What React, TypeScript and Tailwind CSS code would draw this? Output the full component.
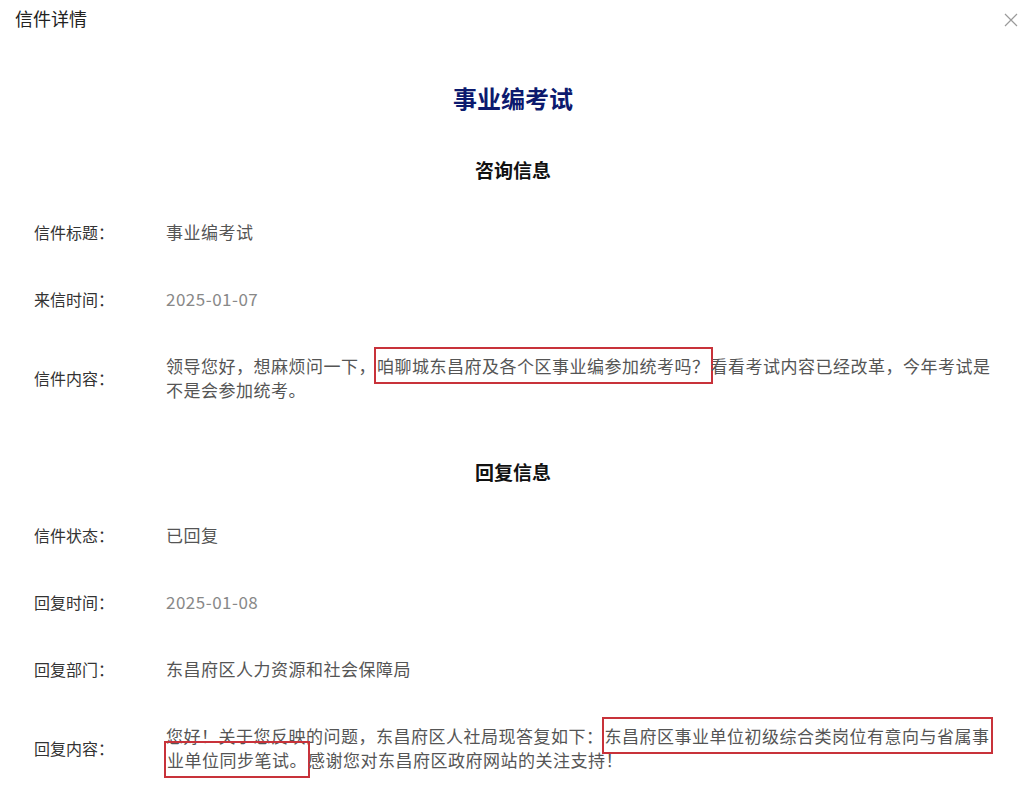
import React from "react";

const font = { fontFamily: '"Noto Sans CJK SC", "Noto Sans", sans-serif' };

function Mark({ children }: { children: React.ReactNode }) {
  return (
    <span className="box-decoration-clone px-[1px] py-[4px] ring-2 ring-[#c8323a]">
      {children}
    </span>
  );
}

function Row({
  label,
  children,
  light,
}: {
  label: string;
  children: React.ReactNode;
  light?: boolean;
}) {
  return (
    <div className="flex items-center">
      <div className="w-[132px] shrink-0 text-[16px] leading-[24px] text-[#333]">
        {label}
      </div>
      <div
        className={
          "flex-1 text-[17px] leading-[24px] tracking-[0.5px] " +
          (light ? "text-[#888]" : "text-[#555]")
        }
      >
        {children}
      </div>
    </div>
  );
}

export default function App() {
  return (
    <div className="w-[1026px] h-[806px] bg-white overflow-hidden" style={font}>
      <div className="h-[37px] flex items-center justify-between pl-[15px] pr-[8px]">
        <span className="text-[18px] text-[#222]">信件详情</span>
        <svg width="14" height="14" viewBox="0 0 14 14" className="mt-[3px]">
          <path d="M1 1L13 13M13 1L1 13" stroke="#9a9a9a" strokeWidth="1.2" />
        </svg>
      </div>

      <h1 className="mt-[45px] text-center text-[24px] leading-[32px] font-bold text-[#0c1a6e]">
        事业编考试
      </h1>

      <h2 className="mt-[42px] text-center text-[19px] leading-[28px] font-bold text-[#111]">
        咨询信息
      </h2>

      <div className="mt-[36px] pl-[34px] pr-[30px] flex flex-col gap-[43px]">
        <Row label="信件标题：">事业编考试</Row>
        <Row label="来信时间：" light>
          2025-01-07
        </Row>
        <Row label="信件内容：">
          领导您好，想麻烦问一下，
          <Mark>咱聊城东昌府及各个区事业编参加统考吗？</Mark>
          看看考试内容已经改革，今年考试是不是会参加统考。
        </Row>
      </div>

      <h2 className="mt-[56px] text-center text-[19px] leading-[28px] font-bold text-[#111]">
        回复信息
      </h2>

      <div className="mt-[37px] pl-[34px] pr-[30px] flex flex-col gap-[43px]">
        <Row label="信件状态：">已回复</Row>
        <Row label="回复时间：" light>
          2025-01-08
        </Row>
        <Row label="回复部门：">东昌府区人力资源和社会保障局</Row>
        <Row label="回复内容：">
          您好！关于您反映的问题，东昌府区人社局现答复如下：
          <Mark>东昌府区事业单位初级综合类岗位有意向与省属事业单位同步笔试。</Mark>
          感谢您对东昌府区政府网站的关注支持！
        </Row>
      </div>
    </div>
  );
}
